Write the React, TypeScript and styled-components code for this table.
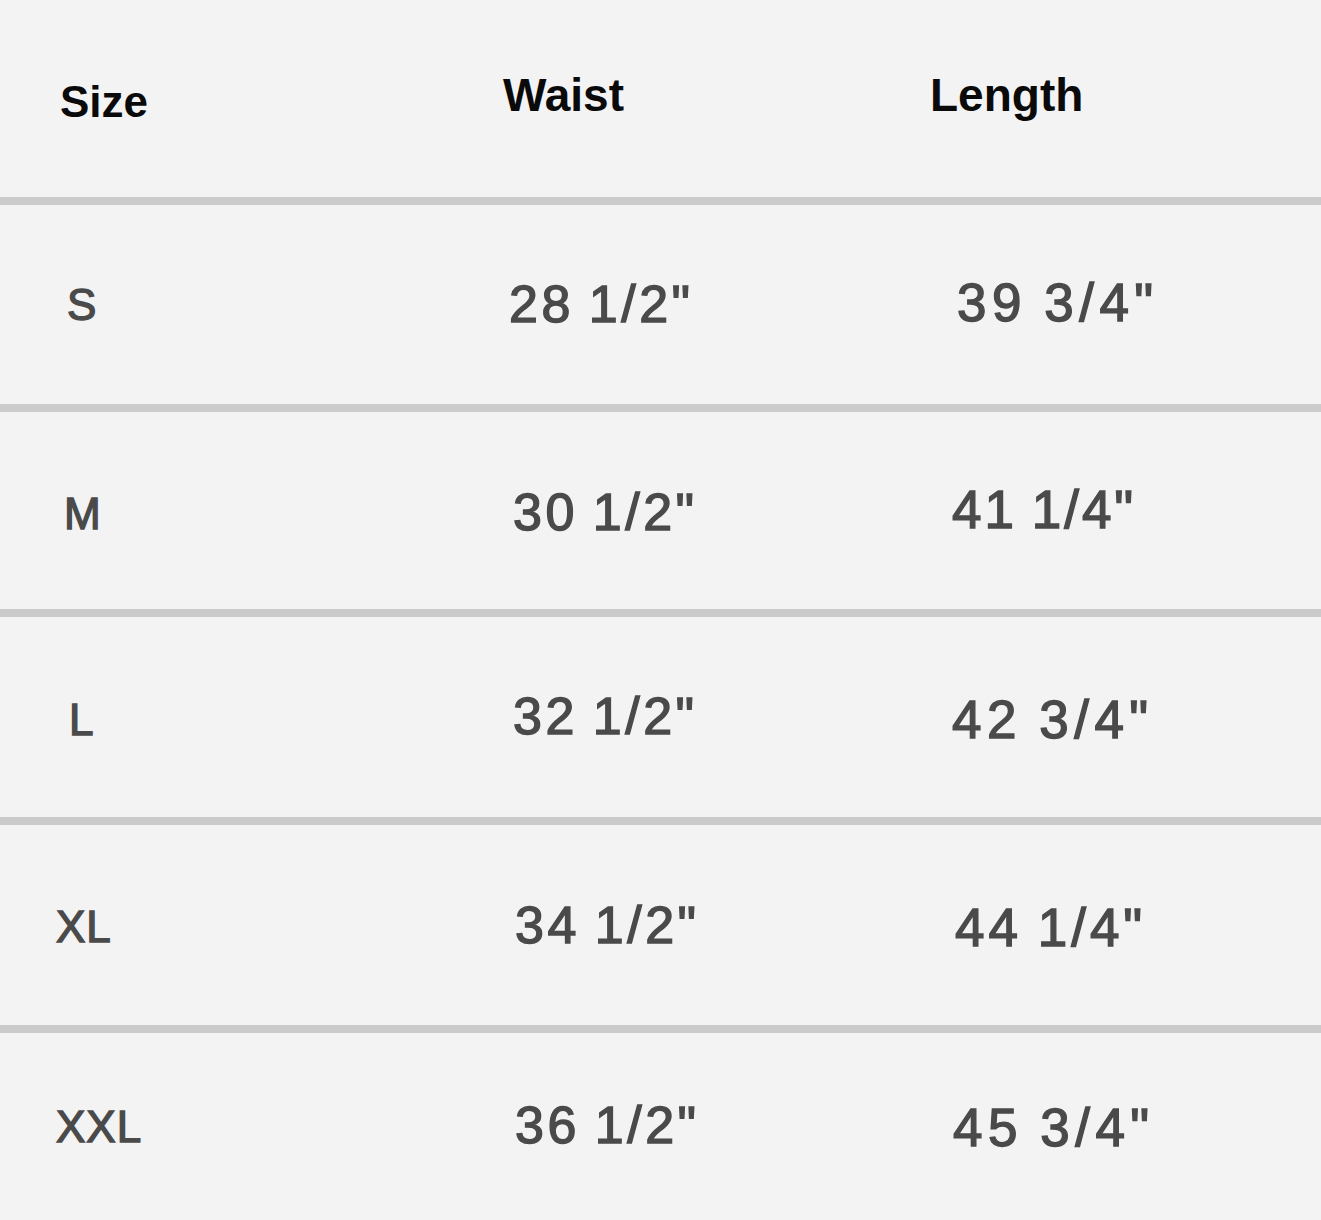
import React from "react";
import styled, { createGlobalStyle } from "styled-components";

const Global = createGlobalStyle`
  html, body { margin: 0; padding: 0; background: #f3f3f3; }
  body { font-family: "Liberation Sans", Arial, sans-serif; }
`;

const Table = styled.div`
  width: 1321px;
  height: 1220px;
  background: #f3f3f3;
  display: flex;
  flex-direction: column;
  overflow: hidden;
`;

const Row = styled.div<{ $h: number; $last?: boolean }>`
  display: grid;
  grid-template-columns: 450px 440px 1fr;
  align-items: center;
  height: ${(p) => p.$h}px;
  box-sizing: border-box;
  border-bottom: ${(p) => (p.$last ? "none" : "8px solid #cbcbcb")};
`;

const Head = styled.div<{ $x: number; $y?: number; $size: number }>`
  padding-left: ${(p) => p.$x}px;
  margin-top: ${(p) => p.$y ?? 0}px;
  font-size: ${(p) => p.$size}px;
  font-weight: 700;
  color: #0a0a0a;
  line-height: 1;
`;

const Cell = styled.div<{ $x: number; $y?: number; $size: number; $ls?: number }>`
  padding-left: ${(p) => p.$x}px;
  margin-top: ${(p) => p.$y ?? 0}px;
  font-size: ${(p) => p.$size}px;
  font-weight: 400;
  color: #4a4a4a;
  line-height: 1;
  -webkit-text-stroke: 1.4px #4a4a4a;
  letter-spacing: ${(p) => p.$ls ?? 1}px;
  word-spacing: -3px;
  white-space: nowrap;
`;

type R = {
  size: string;
  sx: number;
  sy: number;
  waist: string;
  wx: number;
  wy: number;
  len: string;
  lx: number;
  ly: number;
  lls: number;
};

const rows: R[] = [
  { size: "S", sx: 67, sy: 0, waist: "28 1/2\"", wx: 59, wy: -2, len: "39 3/4\"", lx: 67, ly: -4, lls: 5.5 },
  { size: "M", sx: 64, sy: 6, waist: "30 1/2\"", wx: 63, wy: 2, len: "41 1/4\"", lx: 62, ly: -2, lls: 3 },
  { size: "L", sx: 69, sy: 6, waist: "32 1/2\"", wx: 63, wy: -2, len: "42 3/4\"", lx: 62, ly: 4, lls: 5.5 },
  { size: "XL", sx: 56, sy: 4, waist: "34 1/2\"", wx: 65, wy: 0, len: "44 1/4\"", lx: 65, ly: 4, lls: 4 },
  { size: "XXL", sx: 56, sy: 0, waist: "36 1/2\"", wx: 65, wy: -4, len: "45 3/4\"", lx: 63, ly: 2, lls: 5.5 },
];

const heights = [412 - 205, 617 - 412, 825 - 617, 1033 - 825, 187];

export default function App() {
  return (
    <>
      <Global />
      <Table>
        <Row $h={205}>
          <Head $x={60} $y={6} $size={44}>Size</Head>
          <Head $x={53} $y={-8} $size={46}>Waist</Head>
          <Head $x={40} $y={-8} $size={46}>Length</Head>
        </Row>
        {rows.map((r, i) => (
          <Row key={r.size} $h={heights[i]} $last={i === rows.length - 1}>
            <Cell $x={r.sx} $y={r.sy} $size={44}>{r.size}</Cell>
            <Cell $x={r.wx} $y={r.wy} $size={52} $ls={3.5}>{r.waist}</Cell>
            <Cell $x={r.lx} $y={r.ly} $size={53} $ls={r.lls}>{r.len}</Cell>
          </Row>
        ))}
      </Table>
    </>
  );
}
